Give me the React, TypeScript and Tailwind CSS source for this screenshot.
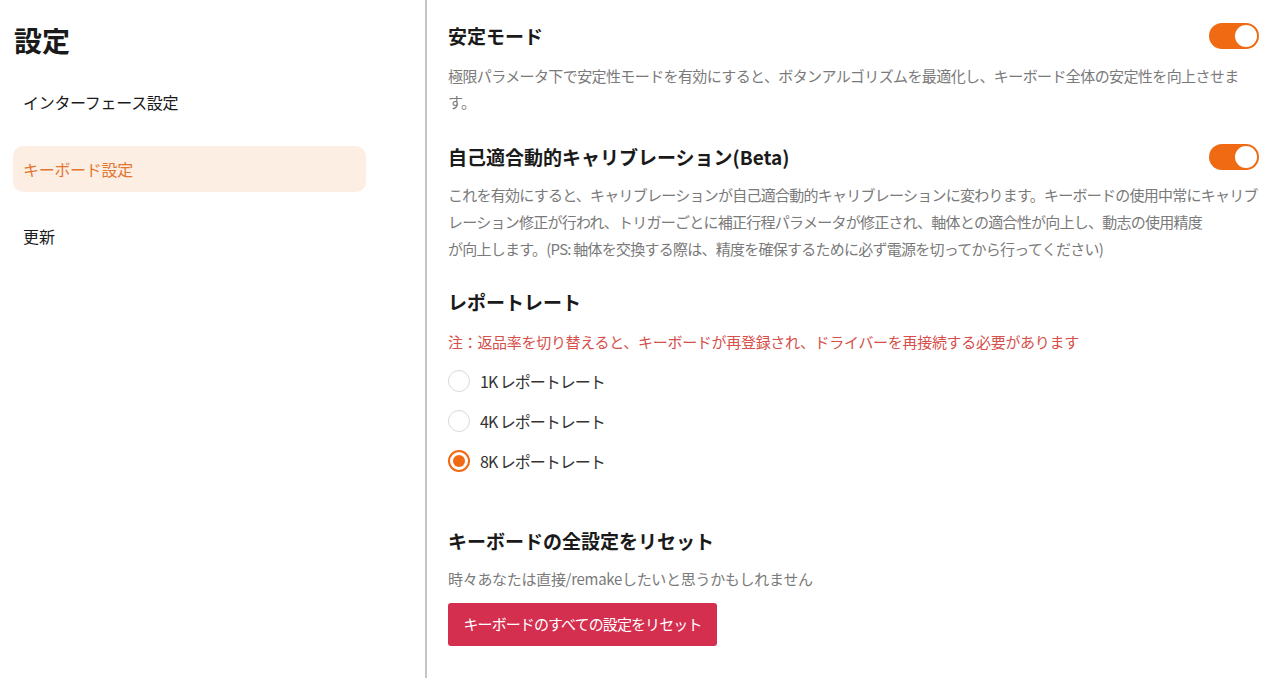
import React, { useState } from 'react';

const font = { fontFamily: '"Noto Sans CJK JP", "Noto Sans", sans-serif' };

const Toggle: React.FC<{ on: boolean; onClick: () => void }> = ({ on, onClick }) => (
  <button
    onClick={onClick}
    className={`relative shrink-0 w-[50px] h-[26px] rounded-full transition-colors ${on ? 'bg-[#f06a14]' : 'bg-gray-300'}`}
  >
    <span
      className={`absolute top-[2px] w-[22px] h-[22px] rounded-full bg-white transition-all ${on ? 'left-[26px]' : 'left-[2px]'}`}
    />
  </button>
);

const App: React.FC = () => {
  const [stable, setStable] = useState(true);
  const [calib, setCalib] = useState(true);
  const [rate, setRate] = useState('8K');

  const rates = ['1K', '4K', '8K'];

  return (
    <div className="flex w-full h-[678px] bg-white text-[#1a1a1a] overflow-hidden" style={font}>
      {/* Sidebar */}
      <aside className="w-[427px] shrink-0 border-r-2 border-[#c4c4c4] pl-[13px] pr-[59px]">
        <h1 className="pt-[23px] pl-px text-[28px] leading-[34px] font-bold">設定</h1>
        <nav className="mt-[22px] flex flex-col gap-[21px]">
          <div className="h-[46px] flex items-center px-[10px] text-[16px] tracking-[-0.3px]">インターフェース設定</div>
          <div className="h-[46px] flex items-center px-[10px] text-[16px] tracking-[-0.3px] rounded-[10px] bg-[#fdeee4] text-[#e2762f]">
            キーボード設定
          </div>
          <div className="h-[46px] flex items-center px-[10px] text-[16px]">更新</div>
        </nav>
      </aside>

      {/* Content */}
      <main className="flex-1 pl-[21px] pr-[21px] pt-[22px]">
        <section>
          <div className="flex items-center justify-between h-[28px]">
            <h2 className="text-[19px] font-bold">安定モード</h2>
            <Toggle on={stable} onClick={() => setStable(!stable)} />
          </div>
          <p className="mt-[13px] text-[15px] leading-[26px] text-[#7a7a7a] tracking-[-0.6px]">
            極限パラメータ下で安定性モードを有効にすると、ボタンアルゴリズムを最適化し、キーボード全体の安定性を向上させます。
          </p>
        </section>

        <section className="mt-[28px]">
          <div className="flex items-center justify-between h-[28px]">
            <h2 className="text-[19px] font-bold">自己適合動的キャリブレーション(Beta)</h2>
            <Toggle on={calib} onClick={() => setCalib(!calib)} />
          </div>
          <p className="mt-[10px] mr-[-12px] text-[15px] leading-[27px] text-[#7a7a7a] tracking-[-0.75px]">
            これを有効にすると、キャリブレーションが自己適合動的キャリブレーションに変わります。キーボードの使用中常にキャリブ
            <br />
            レーション修正が行われ、トリガーごとに補正行程パラメータが修正され、軸体との適合性が向上し、動志の使用精度
            <br />
            が向上します。(PS: 軸体を交換する際は、精度を確保するために必ず電源を切ってから行ってください)
          </p>
        </section>

        <section className="mt-[26px]">
          <h2 className="h-[28px] flex items-center text-[19px] font-bold">レポートレート</h2>
          <p className="mt-[13px] text-[15px] leading-[26px] text-[#d64f4a] tracking-[-0.3px]">
            注：返品率を切り替えると、キーボードが再登録され、ドライバーを再接続する必要があります
          </p>
          <div className="mt-[6px] flex flex-col">
            {rates.map((r) => (
              <label key={r} className="h-[40px] flex items-center gap-[10px] cursor-pointer" onClick={() => setRate(r)}>
                <span
                  className={`w-[22px] h-[22px] rounded-full flex items-center justify-center ${rate === r ? 'border-2 border-[#f06a14]' : 'border border-[#d9d9d9]'}`}
                >
                  {rate === r && <span className="w-[12px] h-[12px] rounded-full bg-[#f06a14]" />}
                </span>
                <span className="text-[16px] text-[#333] tracking-[-1px]">{r} レポートレート</span>
              </label>
            ))}
          </div>
        </section>

        <section className="mt-[46px]">
          <h2 className="h-[28px] flex items-center text-[19px] font-bold">キーボードの全設定をリセット</h2>
          <p className="mt-[11px] text-[15px] leading-[26px] text-[#7a7a7a] tracking-[-0.3px]">
            時々あなたは直接/remakeしたいと思うかもしれません
          </p>
          <button className="mt-[11px] h-[43px] w-[269px] rounded-[3px] bg-[#d42f4f] text-white text-[15px] tracking-[-0.9px] whitespace-nowrap">
            キーボードのすべての設定をリセット
          </button>
        </section>
      </main>
    </div>
  );
};

export default App;
